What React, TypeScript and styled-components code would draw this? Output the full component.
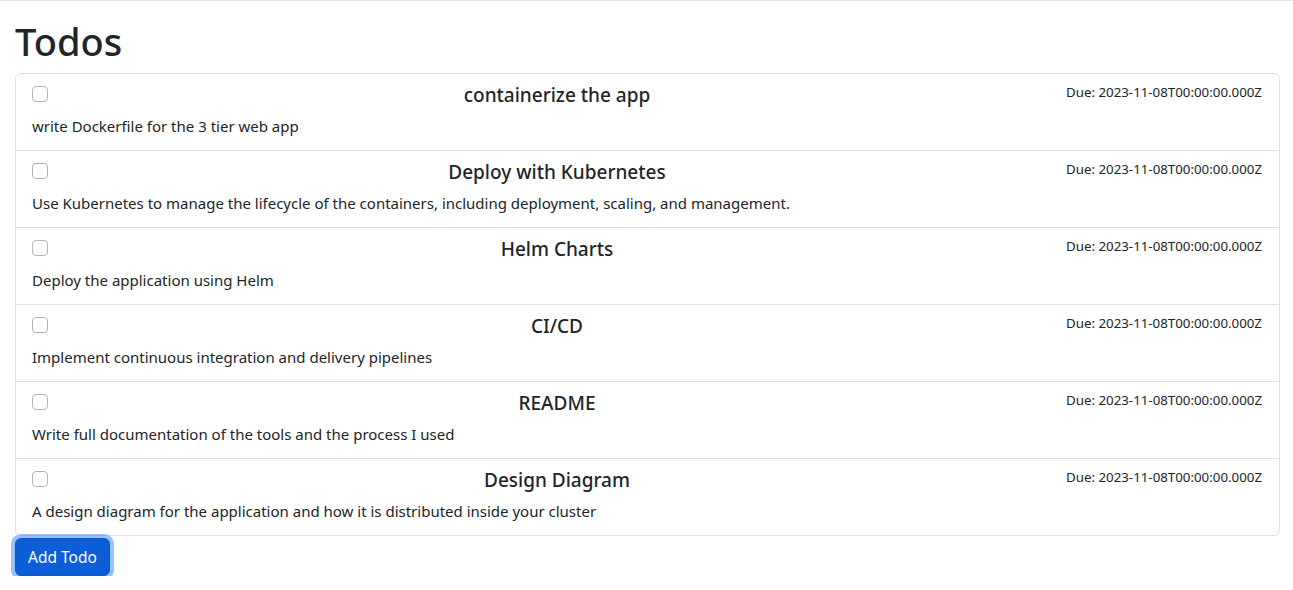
import React from "react";
import styled, { createGlobalStyle } from "styled-components";

type Todo = {
  id: number;
  title: string;
  description: string;
  due: string;
};

const todos: Todo[] = [
  { id: 1, title: "containerize the app", description: "write Dockerfile for the 3 tier web app", due: "2023-11-08T00:00:00.000Z" },
  { id: 2, title: "Deploy with Kubernetes", description: "Use Kubernetes to manage the lifecycle of the containers, including deployment, scaling, and management.", due: "2023-11-08T00:00:00.000Z" },
  { id: 3, title: "Helm Charts", description: "Deploy the application using Helm", due: "2023-11-08T00:00:00.000Z" },
  { id: 4, title: "CI/CD", description: "Implement continuous integration and delivery pipelines", due: "2023-11-08T00:00:00.000Z" },
  { id: 5, title: "README", description: "Write full documentation of the tools and the process I used", due: "2023-11-08T00:00:00.000Z" },
  { id: 6, title: "Design Diagram", description: "A design diagram for the application and how it is distributed inside your cluster", due: "2023-11-08T00:00:00.000Z" },
];

const App: React.FC = () => {
  return (
    <>
      <GlobalStyle />
      <Container>
        <Title>Todos</Title>
        <List>
          {todos.map((todo) => (
            <Item key={todo.id}>
              <TopRow>
                <Check type="checkbox" />
                <ItemTitle>{todo.title}</ItemTitle>
                <Due>Due: {todo.due}</Due>
              </TopRow>
              <Description>{todo.description}</Description>
            </Item>
          ))}
        </List>
        <AddButton>Add Todo</AddButton>
      </Container>
    </>
  );
};

export default App;

const GlobalStyle = createGlobalStyle`
  body {
    margin: 0;
    background: #fff;
    color: #212529;
    font-family: "Noto Sans", "Open Sans", sans-serif;
    border-top: 1px solid #dee2e6;
  }
`;

const Container = styled.div`
  padding: 0 15px;
  display: flex;
  flex-direction: column;
  align-items: flex-start;
`;

const Title = styled.h1`
  font-size: 38px;
  font-weight: 500;
  line-height: 1.2;
  margin: 18px 0 8px;
`;

const List = styled.ul`
  list-style: none;
  margin: 0;
  padding: 0;
  width: 100%;
  border: 1px solid #dee2e6;
  border-radius: 6px;
`;

const Item = styled.li`
  padding: 8px 16px;
  height: 60px;
  & + & {
    border-top: 1px solid #dee2e6;
  }
`;

const TopRow = styled.div`
  display: flex;
  justify-content: space-between;
  align-items: flex-start;
  height: 30px;
`;

const Check = styled.input`
  appearance: none;
  width: 16px;
  height: 16px;
  margin: 4px 0 0;
  border: 1px solid #adb5bd;
  border-radius: 4px;
  background: #fff;
`;

const ItemTitle = styled.h5`
  margin: 0;
  font-size: 19px;
  font-weight: 500;
  line-height: 26px;
`;

const Due = styled.small`
  font-size: 13.3px;
  line-height: 20px;
  margin-right: 1px;
`;

const Description = styled.p`
  margin: 3px 0 0;
  font-size: 15px;
  line-height: 22px;
`;

const AddButton = styled.button`
  margin-top: 2px;
  font-family: inherit;
  font-size: 15.5px;
  line-height: 24px;
  color: #fff;
  background: #0b5ed7;
  border: 1px solid #0a58ca;
  border-radius: 6px;
  padding: 6px 12px;
  box-shadow: 0 0 0 4px rgba(49, 132, 253, 0.5);
`;
